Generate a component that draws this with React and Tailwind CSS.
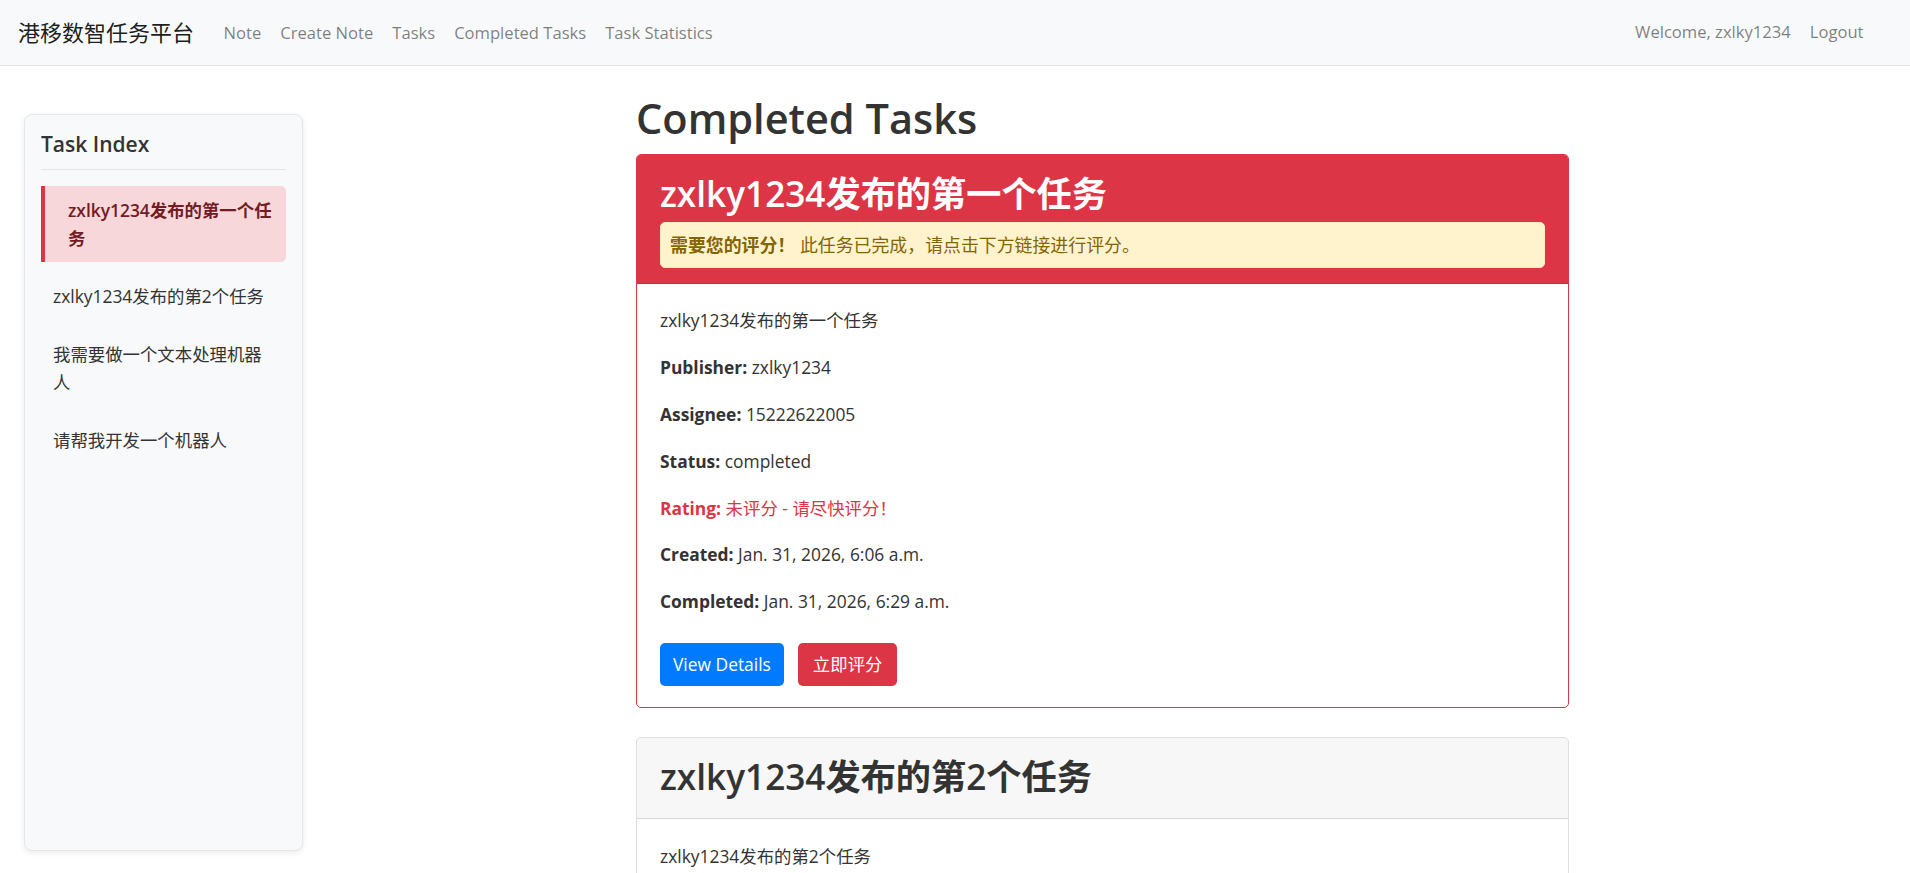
import React from 'react';

const NAV_LINKS = ['Note', 'Create Note', 'Tasks', 'Completed Tasks', 'Task Statistics'];

const INDEX = [
  { title: 'zxlky1234发布的第一个任务', active: true },
  { title: 'zxlky1234发布的第2个任务' },
  { title: '我需要做一个文本处理机器人' },
  { title: '请帮我开发一个机器人' },
];

const TASKS = [
  {
    title: 'zxlky1234发布的第2个任务',
    publisher: 'zxlky1234',
    assignee: '15222622005',
    rating: '5 / 5',
    created: 'Jan. 31, 2026, 6:10 a.m.',
    completed: 'Jan. 31, 2026, 6:35 a.m.',
  },
  {
    title: '我需要做一个文本处理机器人',
    publisher: 'zxlky1234',
    assignee: '15222622005',
    rating: '4 / 5',
    created: 'Jan. 31, 2026, 7:02 a.m.',
    completed: 'Jan. 31, 2026, 8:15 a.m.',
  },
  {
    title: '请帮我开发一个机器人',
    publisher: 'zxlky1234',
    assignee: '15222622005',
    rating: '5 / 5',
    created: 'Jan. 31, 2026, 8:40 a.m.',
    completed: 'Jan. 31, 2026, 9:12 a.m.',
  },
];

function Field({ label, children, className = '' }) {
  return (
    <p className={`mb-[20.4px] leading-[26.4px] ${className}`}>
      <span className="font-bold">{label}:</span> {children}
    </p>
  );
}

export default function App() {
  return (
    <div className="min-h-screen bg-white text-[#333] text-[17.4px] font-['Open_Sans','Noto_Sans_CJK_SC',sans-serif]">
      {/* Navbar */}
      <nav className="h-[66px] bg-[#f8f9fa] border-b border-[#e6e6e6] flex items-center justify-between pl-[18px] pr-[37px]">
        <div className="flex items-center">
          <span className="text-[22px] text-black/90 mr-[20px] leading-[33px]">港移数智任务平台</span>
          {NAV_LINKS.map((l) => (
            <a key={l} className="px-[9.5px] text-[16.6px] text-black/50 leading-[26px]">{l}</a>
          ))}
        </div>
        <div className="flex items-center text-[16.6px]">
          <span className="px-[9.5px] text-black/50">Welcome, zxlky1234</span>
          <a className="px-[9.5px] text-black/50">Logout</a>
        </div>
      </nav>

      <div className="flex items-start">
        {/* Sidebar */}
        <aside className="ml-[24px] mt-[48px] w-[279px] h-[737px] shrink-0 rounded-[8px] border border-[#e4e6e8] bg-[#f8f9fa] shadow-[0_2px_6px_rgba(0,0,0,0.08)] px-[16px] pt-[16px]">
          <h5 className="text-[21px] leading-[26.4px] font-semibold pb-[12px] border-b border-[#e2e4e6] text-[#333]">Task Index</h5>
          <div className="mt-[16px] flex flex-col gap-[10px]">
            {INDEX.map((it) =>
              it.active ? (
                <div key={it.title} className="border-l-4 border-[#dc3545] bg-[#f8d7da] rounded-r-[5px] pl-[23px] pr-[8px] py-[10px] leading-[28px] text-[#721c24] font-semibold">
                  {it.title}
                </div>
              ) : (
                <div key={it.title} className="pl-[12px] pr-[12px] py-[10px] leading-[28px] text-[#333]">
                  {it.title}
                </div>
              )
            )}
          </div>
        </aside>

        {/* Main */}
        <main className="ml-[333px] w-[933px] shrink-0 mt-[26px] pb-[40px]">
          <h1 className="text-[41.5px] leading-[53px] font-semibold mb-[9px] text-[#333]">Completed Tasks</h1>

          {/* Needs rating */}
          <div className="mb-[29px] rounded-[5px] border border-[#dc3545] overflow-hidden">
            <div className="bg-[#dc3545] text-white px-[23px] pt-[17px] pb-[15px] border-b border-black/10">
              <h2 className="text-[35.2px] leading-[42px] font-semibold mb-[8px]">zxlky1234发布的第一个任务</h2>
              <div className="rounded-[5px] border border-[#ffeeba] bg-[#fff3cd] text-[#856404] px-[9px] py-[9px] leading-[26.4px] text-[17.9px]">
                <span className="font-bold">需要您的评分！</span> 此任务已完成，请点击下方链接进行评分。
              </div>
            </div>
            <div className="px-[23px] pt-[23px] pb-[21px]">
              <p className="mb-[20.4px] leading-[26.4px]">zxlky1234发布的第一个任务</p>
              <Field label="Publisher">zxlky1234</Field>
              <Field label="Assignee">15222622005</Field>
              <Field label="Status">completed</Field>
              <Field label="Rating" className="text-[#dc3545]">未评分 - 请尽快评分！</Field>
              <Field label="Created">Jan. 31, 2026, 6:06 a.m.</Field>
              <Field label="Completed">Jan. 31, 2026, 6:29 a.m.</Field>
              <div className="mt-[28px] flex gap-[14px]">
                <button className="h-[43px] px-[13px] rounded-[5px] bg-[#007bff] text-white">View Details</button>
                <button className="h-[43px] px-[15px] rounded-[5px] bg-[#dc3545] text-white">立即评分</button>
              </div>
            </div>
          </div>

          {TASKS.map((t) => (
            <div key={t.title} className="mb-[29px] rounded-[5px] border border-black/[0.125] overflow-hidden">
              <div className="bg-black/[0.03] px-[23px] pt-[17px] pb-[13px] border-b border-black/[0.125]">
                <h2 className="text-[35.2px] leading-[42px] font-semibold mb-[8px] text-[#333]">{t.title}</h2>
              </div>
              <div className="px-[23px] pt-[24px] pb-[21px]">
                <p className="mb-[20.4px] leading-[26.4px]">{t.title}</p>
                <Field label="Publisher">{t.publisher}</Field>
                <Field label="Assignee">{t.assignee}</Field>
                <Field label="Status">completed</Field>
                <Field label="Rating">{t.rating}</Field>
                <Field label="Created">{t.created}</Field>
                <Field label="Completed">{t.completed}</Field>
                <div className="mt-[28px] flex gap-[14px]">
                  <button className="h-[43px] px-[13px] rounded-[5px] bg-[#007bff] text-white">View Details</button>
                </div>
              </div>
            </div>
          ))}
        </main>
      </div>
    </div>
  );
}
